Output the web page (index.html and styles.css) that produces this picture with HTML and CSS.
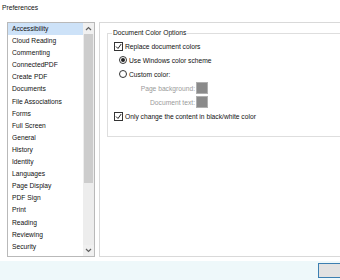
FILE: index.html
```html
<!DOCTYPE html>
<html>
<head>
<meta charset="utf-8">
<title>Preferences</title>
<link rel="stylesheet" href="styles.css">
</head>
<body>
<div class="window">
  <div class="title">Preferences</div>
  <div class="main">
    <div class="list">
      <ul class="items">
        <li class="item sel">Accessibility</li>
        <li class="item">Cloud Reading</li>
        <li class="item">Commenting</li>
        <li class="item">ConnectedPDF</li>
        <li class="item">Create PDF</li>
        <li class="item">Documents</li>
        <li class="item">File Associations</li>
        <li class="item">Forms</li>
        <li class="item">Full Screen</li>
        <li class="item">General</li>
        <li class="item">History</li>
        <li class="item">Identity</li>
        <li class="item">Languages</li>
        <li class="item">Page Display</li>
        <li class="item">PDF Sign</li>
        <li class="item">Print</li>
        <li class="item">Reading</li>
        <li class="item">Reviewing</li>
        <li class="item">Security</li>
      </ul>
      <div class="scrollbar">
        <div class="arrow"><svg width="7" height="5" viewBox="0 0 7 5"><path d="M1 4 L3.5 1.5 L6 4" fill="none" stroke="#606060" stroke-width="1.2"/></svg></div>
        <div class="thumb"></div>
        <div class="track"></div>
        <div class="arrow"><svg width="7" height="5" viewBox="0 0 7 5"><path d="M1 1 L3.5 3.5 L6 1" fill="none" stroke="#606060" stroke-width="1.2"/></svg></div>
      </div>
    </div>
    <div class="panel">
      <fieldset class="group">
        <legend class="legend">Document Color Options</legend>
        <div class="row"><span class="cb"><svg width="7" height="7" viewBox="0 0 7 7"><path d="M1 3.5 L3 5.5 L6.2 1" fill="none" stroke="#222" stroke-width="1"/></svg></span><span>Replace document colors</span></div>
        <div class="row sub"><span class="radio on"></span><span>Use Windows color scheme</span></div>
        <div class="row sub"><span class="radio"></span><span>Custom color:</span></div>
        <div class="row swrow"><span class="dim">Page background:</span><span class="swatch"></span></div>
        <div class="row swrow"><span class="dim">Document text:</span><span class="swatch"></span></div>
        <div class="row"><span class="cb"><svg width="7" height="7" viewBox="0 0 7 7"><path d="M1 3.5 L3 5.5 L6.2 1" fill="none" stroke="#222" stroke-width="1"/></svg></span><span>Only change the content in black/white color</span></div>
      </fieldset>
    </div>
  </div>
  <div class="footer"><button class="btn">OK</button></div>
</div>
</body>
</html>
```
FILE: styles.css
```css
html, body {
  margin: 0;
  padding: 0;
  background: #ffffff;
  overflow: hidden;
}
.window {
  width: 340px;
  height: 280px;
  display: flex;
  flex-direction: column;
  font-family: "Liberation Sans", Arial, sans-serif;
  font-size: 6.7px;
  color: #111;
  overflow: hidden;
}
.title {
  height: 22px;
  flex: none;
  padding: 4px 0 0 2px;
  box-sizing: border-box;
  line-height: 7px;
}
.main {
  display: flex;
  flex: none;
  height: 235px;
  padding-left: 7px;
  gap: 4px;
}
.list {
  width: 88px;
  flex: none;
  box-sizing: border-box;
  border: 1px solid #b9b9b9;
  display: flex;
  background: #fff;
}
.items {
  list-style: none;
  margin: 0;
  padding: 0;
  flex: 1;
}
.item {
  height: 12.1px;
  line-height: 12.1px;
  padding-left: 4px;
  white-space: nowrap;
}
.item.sel {
  background: #cde2f8;
}
.scrollbar {
  width: 11px;
  flex: none;
  display: flex;
  flex-direction: column;
  background: #ededed;
}
.arrow {
  height: 11px;
  flex: none;
  display: flex;
  align-items: center;
  justify-content: center;
  background: #f0f0f0;
}
.thumb {
  height: 149px;
  flex: none;
  margin: 0 1px;
  background: #cdcdcd;
}
.track {
  flex: 1;
}
.panel {
  width: 300px;
  flex: none;
  box-sizing: border-box;
  border: 1px solid #d9d9d9;
  padding: 6px 0 0 7px;
}
.group {
  margin: 0;
  border: 1px solid #dedede;
  padding: 2px 0 13px 6px;
  display: flex;
  flex-direction: column;
}
.legend {
  padding: 0 1px;
  margin-left: -2px;
  line-height: 8px;
}
.row {
  height: 14px;
  display: flex;
  align-items: center;
  white-space: nowrap;
}
.row.sub {
  padding-left: 5px;
}
.cb {
  width: 7px;
  height: 7px;
  border: 1px solid #333;
  box-sizing: content-box;
  margin-right: 2px;
  display: flex;
  align-items: center;
  justify-content: center;
  background: #fff;
}
.radio {
  width: 6px;
  height: 6px;
  border: 1px solid #333;
  border-radius: 50%;
  margin-right: 2px;
  display: flex;
  align-items: center;
  justify-content: center;
}
.radio.on::after {
  content: "";
  width: 4px;
  height: 4px;
  border-radius: 50%;
  background: #222;
}
.swrow {
  width: 94px;
  justify-content: flex-end;
  gap: 1px;
}
.dim {
  color: #9a9a9a;
}
.swatch {
  width: 12px;
  height: 12px;
  box-sizing: border-box;
  border: 1px solid #b0b0b0;
  background: #8a8a8a;
}
.footer {
  flex: 1;
  margin-top: 4px;
  background: #eef8fa;
  display: flex;
  justify-content: flex-start;
  padding: 2px 0 0 318px;
}
.btn {
  width: 60px;
  height: 15px;
  border: 1px solid #3c7fb1;
  background: #e2e2e2;
  font-family: "Liberation Sans", Arial, sans-serif;
  font-size: 6.7px;
  padding: 0;
  color: #111;
  flex: none;
}
```
